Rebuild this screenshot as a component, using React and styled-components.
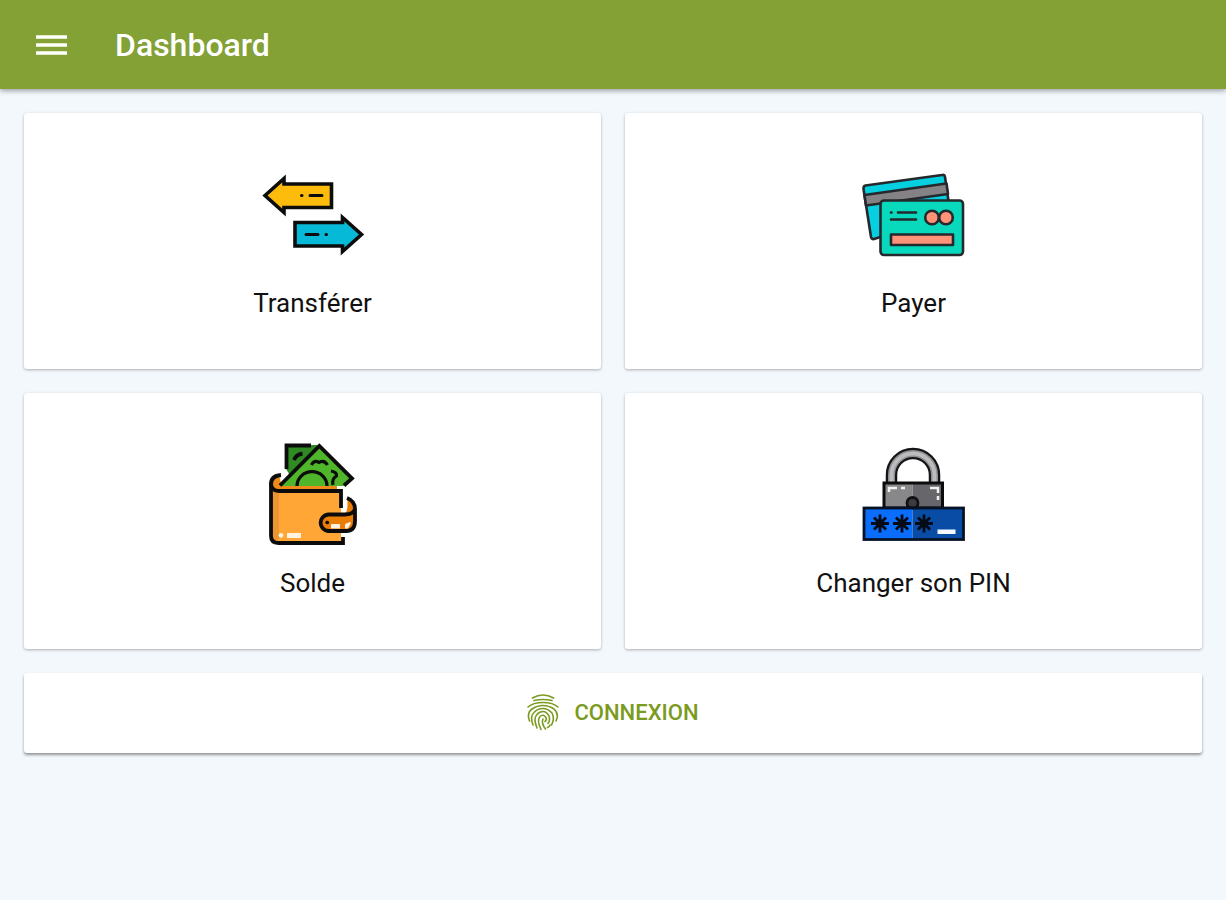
import styled, { createGlobalStyle } from "styled-components";

const GlobalStyle = createGlobalStyle`
  * {
    box-sizing: border-box;
  }
  body {
    margin: 0;
    background-color: #f3f8fc;
    font-family: Roboto, "Liberation Sans", sans-serif;
  }
`;

function TransferIcon() {
  return (
    <Icon viewBox="0 0 102 102" aria-hidden="true">
      <g stroke="#0c0c0c" strokeWidth="3.6">
        <path fill="#fdbc0c" d="M3 32.5 22 15.5V21H69.5V44.5H22V49.5Z" />
        <path fill="#06b9d6" d="M33 59.5H80.5V54.5L99.5 71.5 80.5 88.5V83H33Z" />
        <path
          fill="none"
          strokeWidth="3"
          strokeLinecap="round"
          d="M39.5 32.5h.5M48 32.5h12M44 71.5h12M64 71.5h.5"
        />
      </g>
    </Icon>
  );
}

function CardsIcon() {
  return (
    <Icon viewBox="0 0 102 102" aria-hidden="true">
      <g stroke="#25292d" strokeWidth="2.6" strokeLinejoin="round">
        <path
          fill="#06cfe0"
          d="M2.5 22.5 79 12Q81.5 11.5 82 14L87.5 52 11 76Q8.5 76.5 8 74L.5 26Q.3 23 2.5 22.5Z"
        />
        <path fill="#858285" d="M1.5 32 83.5 20.5 85 31 3 42.5Z" />
        <rect x="17.5" y="37.5" width="82.5" height="54.5" rx="3.5" fill="#08d8bb" />
        <circle cx="69" cy="54.5" r="6.8" fill="#ff9379" />
        <circle cx="83" cy="54.5" r="6.8" fill="#ff9379" />
        <rect x="28" y="71.5" width="62" height="10.5" fill="#ff9379" />
        <path
          fill="none"
          strokeLinecap="round"
          d="M28 49.5h.5M35 49.5h18M28 56.5h25"
        />
      </g>
    </Icon>
  );
}

function WalletIcon() {
  return (
    <Icon viewBox="1 0 102 102" aria-hidden="true">
      <path fill="#2f8a24" d="M25 2H56V14L30 34 25 26Z" />
      <path fill="#ee8a17" d="M18 32Q10 34 10 40V48H76V40H20Z" />
      <path fill="#4fb52a" d="M19 43 58.3 3 91 35.5 83 43Z" />
      <path fill="#ffa637" d="M10 40Q10 48 18 48H80V101H17Q10 101 10 94Z" />
      <path fill="#ec9631" d="M11 46 18 48V96L13 98 11 92Z" />
      <path
        fill="#e97d06"
        d="M86 55Q94 58 94 66V79Q94 88 85 88H67A8.5 8.5 0 0 1 67 71.5H82Q88 70 86 55Z"
      />
      <g fill="none" stroke="#0c0c0c" strokeWidth="3.8">
        <path d="M25.5 26V2.5H50M33 17Q35 11.5 41.5 10.5" />
        <path d="M19 42.5 58.3 3 91 35.5 83 42.5" />
        <path
          strokeWidth="3.2"
          d="M50.5 22Q53 16.5 58 19.5 63 16.5 66.5 22M36 43A14.7 14 0 0 1 66 43M70 28Q76 29 75.5 33 70.5 36 72 42"
        />
        <path d="M20 32Q10 33 10 41V93Q10 100 17.5 100H82V94" />
        <path d="M10 40Q10 48 18 48H80V65" />
        <path d="M86 55Q94 58 94 66V78Q94 88 85 88H67A8.3 8.3 0 0 1 67 71.5H84Q94 71 94 65" />
        <path strokeWidth="3.4" strokeLinecap="round" d="M66 79.5h.5" />
      </g>
      <g fill="#fff2e2">
        <circle cx="20" cy="92.3" r="2.4" />
        <rect x="26" y="90" width="14" height="5" />
        <rect x="70" y="81" width="9" height="4.5" />
        <path d="M84 85.5V81L89 79 90 80 87 85.5Z" />
      </g>
    </Icon>
  );
}

function Asterisk({ x }) {
  return (
    <g transform={`translate(${x} 80.5)`}>
      <path
        fill="none"
        stroke="#050b14"
        strokeWidth="2.8"
        d="M0-9V9M-9 0H9M-6-6 6 6M-6 6 6-6"
      />
      <circle r="4" fill="#050b14" />
    </g>
  );
}

const shackle = "M28.5 40V32A21.5 21.5 0 0 1 71.5 32V40";

function PinIcon() {
  return (
    <Icon viewBox="0 0 102 102" aria-hidden="true">
      <g fill="none">
        <path stroke="#151515" strokeWidth="11.5" d={shackle} />
        <path stroke="#8f8f93" strokeWidth="7" d={shackle} />
        <path stroke="#bcbcbe" strokeWidth="4" d={shackle} />
      </g>
      <path fill="#88888a" d="M21 40H49.5V65H21Z" />
      <path fill="#66666b" d="M49.5 40H79V65H49.5Z" />
      <circle
        cx="49.5"
        cy="60"
        r="5.5"
        fill="#3c3c40"
        stroke="#111111"
        strokeWidth="2.8"
      />
      <rect
        x="21"
        y="40"
        width="58.5"
        height="25"
        fill="none"
        stroke="#0c0c0c"
        strokeWidth="3"
      />
      <path
        fill="none"
        stroke="#f2f2f2"
        strokeWidth="2.5"
        d="M26 49V45H34M38 45H42M67 45H75V50M75 53V57"
      />
      <path fill="#0a6dfb" d="M1 65H49.5V96H1Z" />
      <path fill="#084ca6" d="M49.5 65H100V96H49.5Z" />
      <rect
        x="1"
        y="65"
        width="99.5"
        height="31.5"
        fill="none"
        stroke="#071225"
        strokeWidth="2.8"
      />
      <Asterisk x={17} />
      <Asterisk x={39} />
      <Asterisk x={61} />
      <rect x="74.5" y="86.5" width="18" height="4.5" fill="#f4f8ff" />
    </Icon>
  );
}

function FingerprintIcon() {
  return (
    <svg width="32" height="37" viewBox="0 0 32 37" aria-hidden="true">
      <g fill="none" stroke="currentColor" strokeWidth="1.6" strokeLinecap="round">
        <path d="M5.5 4Q16-2 26.5 4M7 6.500Q16 4.500 25 6.500" />
        <path d="M1 13Q6 8.500 16 8.500T31 13" />
        <path d="M2.500 27Q-.5 19 5 15Q10 11.500 16 11.500T27 15Q32.500 20 29 27" />
        <path d="M6 31Q2.500 22 7.500 18Q11 14.500 16 14.500T25 19Q28 25 24.500 31" />
        <path d="M10 34Q6 24 10 20.500Q12.500 17.500 16 17.500T22 22Q23.500 26 21 29.500" />
        <path d="M14 35.500Q9.500 26 13 22.500Q16 19.500 19 23.500Q20 26 18 27.500" />
        <path d="M18.500 35Q14 29 16 25M20.500 33.500Q22.500 33 23 31" />
      </g>
    </svg>
  );
}

const items = [
  { label: "Transférer", Drawing: TransferIcon },
  { label: "Payer", Drawing: CardsIcon },
  { label: "Solde", Drawing: WalletIcon },
  { label: "Changer son PIN", Drawing: PinIcon },
];

export default function App() {
  return (
    <>
      <GlobalStyle />
      <Topo>
        <MenuButton type="button" aria-label="Menu">
          <svg width="31" height="22" viewBox="0 0 31 22" aria-hidden="true">
            <path
              fill="none"
              stroke="#ffffff"
              strokeWidth="3.5"
              d="M0 3H31M0 11H31M0 19H31"
            />
          </svg>
        </MenuButton>
        <h1>Dashboard</h1>
      </Topo>
      <Content>
        <Grid>
          {items.map(({ label, Drawing }) => (
            <Card key={label} type="button">
              <Drawing />
              <span>{label}</span>
            </Card>
          ))}
        </Grid>
        <LoginButton type="button">
          <FingerprintIcon />
          Connexion
        </LoginButton>
      </Content>
    </>
  );
}

const Topo = styled.header`
  display: flex;
  align-items: center;
  height: 89px;
  padding: 0 36px;
  gap: 48px;
  background-color: #83a135;
  box-shadow: 0 2px 5px rgba(0, 0, 0, 0.35);
  h1 {
    margin: 0;
    font-weight: 500;
    font-size: 32px;
    line-height: 40px;
    color: #ffffff;
  }
`;

const MenuButton = styled.button`
  display: flex;
  padding: 0;
  border: 0;
  background: none;
  cursor: pointer;
`;

const Content = styled.main`
  display: flex;
  flex-direction: column;
  gap: 24px;
  padding: 24px;
`;

const Grid = styled.div`
  display: grid;
  grid-template-columns: 1fr 1fr;
  gap: 24px;
`;

const Card = styled.button`
  display: flex;
  flex-direction: column;
  align-items: center;
  gap: 22px;
  padding: 50px 16px;
  border: 0;
  border-radius: 3px;
  background-color: #ffffff;
  box-shadow: 0 1px 3px rgba(0, 0, 0, 0.3);
  font-family: inherit;
  font-size: 26px;
  line-height: 32px;
  color: #111111;
  cursor: pointer;
`;

const Icon = styled.svg`
  display: block;
  width: 102px;
  height: 102px;
  overflow: visible;
`;

const LoginButton = styled.button`
  display: flex;
  align-items: center;
  justify-content: center;
  gap: 15px;
  height: 80px;
  padding: 0 24px 2px;
  border: 0;
  border-radius: 3px;
  background-color: #ffffff;
  box-shadow: 0 2px 3px rgba(0, 0, 0, 0.4);
  font-family: inherit;
  font-weight: 500;
  font-size: 22px;
  text-transform: uppercase;
  color: #7a9a20;
  cursor: pointer;
`;
